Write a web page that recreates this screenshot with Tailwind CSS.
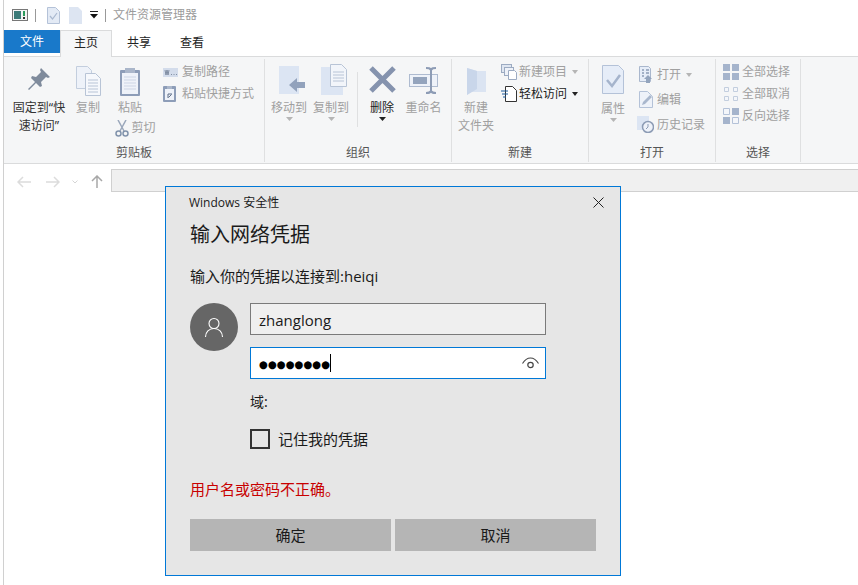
<!DOCTYPE html>
<html lang="zh-CN">
<head>
    <meta charset="UTF-8">
    <title>文件资源管理器</title>
    <script src="https://cdn.jsdelivr.net/npm/@tailwindcss/browser@4"></script>
</head>
<body class="relative w-[858px] h-[585px] overflow-hidden bg-white font-['Noto_Sans','Noto_Sans_CJK_SC',sans-serif] text-[12px] leading-[18px]">
    <div class="ml-[3px] h-full border-l border-[#d0d0d0] flex flex-col">

        <!-- title bar -->
        <div class="h-[30px] flex items-center pl-[8px] text-[#9b9b9b]">
            <svg class="w-[16px] h-[14px]" viewBox="0 0 16 14"><rect x="0.5" y="1.5" width="15" height="11" fill="#f4f4f4" stroke="#777"/><rect x="2" y="3" width="7" height="8" fill="#3c7a78"/><rect x="11" y="3" width="2" height="5" fill="#2a9a5a"/><rect x="11" y="9" width="2" height="2" fill="#333"/></svg>
            <div class="ml-[7px] w-px h-[13px] bg-[#999]"></div>
            <svg class="ml-[11px] w-[13px] h-[17px]" viewBox="0 0 13 17"><path d="M.5.5h8l4 4v12H.5z" fill="#e3eaf5" stroke="#b4c2d8"/><path d="M3 9l2.5 3L10 6" fill="none" stroke="#a9b8cf" stroke-width="1.2"/></svg>
            <svg class="ml-[9px] w-[13px] h-[17px]" viewBox="0 0 13 17"><path d="M0 0h9l4 4v13H0z" fill="#dde5f2"/></svg>
            <svg class="ml-[8px] w-[8px] h-[8px]" viewBox="0 0 8 8"><rect y="0" width="8" height="1" fill="#222"/><path d="M0 3h8L4 7.5z" fill="#111"/></svg>
            <div class="ml-[7px] w-px h-[13px] bg-[#999]"></div>
            <span class="ml-[7px]">文件资源管理器</span>
        </div>

        <!-- tabs -->
        <div class="h-[27px] flex border-b border-[#dadbdc] text-[#222]">
            <div class="w-[56px] h-[23px] bg-[#1979ca] text-white flex items-center justify-center">文件</div>
            <div class="w-[52px] h-[27px] pb-[2px] bg-[#f5f6f7] border border-b-0 border-[#dadbdc] flex items-center justify-center">主页</div>
            <div class="w-[54px] h-[26px] flex items-center justify-center">共享</div>
            <div class="w-[52px] h-[26px] flex items-center justify-center">查看</div>
        </div>

        <!-- ribbon -->
        <div class="h-[107px] bg-[#f5f6f7] border-b border-[#dadbdc] flex text-[#a0a0a0] pt-[2px] pb-[1px]">

            <!-- clipboard -->
            <div class="w-[261px] flex flex-col border-r border-[#dfe0e1]">
                <div class="flex-1 flex">
                    <div class="ml-[4px] w-[62px] flex flex-col items-center text-center text-[#333]">
                        <svg class="mt-[8px] w-[24px] h-[24px]" viewBox="0 0 24 24"><path d="M14 1l9 9-2 1-2-1-5 5 1 4-2 1-4-4-7 7-1-1 7-7-4-4 1-2 4 1 5-5-1-2z" fill="#7f8b9c"/></svg>
                        <div class="mt-[8px] leading-[18px]">固定到“快<br>速访问”</div>
                    </div>
                    <div class="-ml-[3px] w-[42px] flex flex-col items-center">
                        <svg class="mt-[7px] w-[25px] h-[30px]" viewBox="0 0 25 30"><path d="M.5.5h11l4 4v18H.5z" fill="#eef2f9" stroke="#c3cede"/><path d="M9.5 7.5h10l5 5v17h-15z" fill="#f6f8fc" stroke="#b8c4d6"/><path d="M12 14h10M12 17h10M12 20h10M12 23h10M12 26h10" stroke="#b8c4d6"/></svg>
                        <div class="mt-[3px]">复制</div>
                    </div>
                    <div class="w-[42px] flex flex-col items-center">
                        <svg class="mt-[8px] w-[22px] h-[30px]" viewBox="0 0 22 30"><rect x="1" y="3" width="20" height="26" rx="1" fill="#8d9db8"/><rect x="3" y="6" width="16" height="21" fill="#eef2f9"/><path d="M5 10h12M5 13h12M5 16h12M5 19h12M5 22h12" stroke="#ccd5e5"/><rect x="6" y="1" width="10" height="5" fill="#aab6ca"/></svg>
                        <div class="mt-[2px]">粘贴</div>
                        <div class="ml-[10px] mt-[2px] flex items-center gap-[3px] whitespace-nowrap">
                            <svg class="w-[14px] h-[17px] shrink-0" viewBox="0 0 14 17"><path d="M3 0l6 11M11 0L5 11" stroke="#9aa7bb" stroke-width="1.5"/><circle cx="3.5" cy="13.5" r="2.5" fill="none" stroke="#8193ac" stroke-width="1.5"/><circle cx="10.5" cy="13.5" r="2.5" fill="none" stroke="#8193ac" stroke-width="1.5"/></svg>
                            <span>剪切</span>
                        </div>
                    </div>
                    <div class="ml-[12px] pt-[4px] flex flex-col gap-[4px]">
                        <div class="flex items-center gap-[4px]">
                            <svg class="w-[15px] h-[9px]" viewBox="0 0 15 9"><rect width="15" height="9" fill="#d3dceb"/><path d="M2 2l1 5 1-5 1 5 1-5M8 6.5h1M10.5 6.5h1M13 6.5h1" stroke="#6d7b91" fill="none" stroke-width=".8"/></svg>
                            <span>复制路径</span>
                        </div>
                        <div class="flex items-center gap-[6px]">
                            <svg class="w-[13px] h-[16px]" viewBox="0 0 13 16"><rect width="13" height="16" rx="1" fill="#8d9db8"/><rect x="2" y="3" width="9" height="11" fill="#eef2f9"/><rect x="4" y="0" width="5" height="3" fill="#aab6ca"/><path d="M5 12V8h4M8.5 8.5L5.5 11.5" stroke="#5f6f88" fill="none"/></svg>
                            <span>粘贴快捷方式</span>
                        </div>
                    </div>
                </div>
                <div class="text-center text-[#555]">剪贴板</div>
            </div>

            <!-- organize -->
            <div class="w-[187px] flex flex-col border-r border-[#dfe0e1]">
                <div class="flex-1 flex pl-[3px]">
                    <div class="w-[42px] flex flex-col items-center">
                        <svg class="mt-[7px] ml-[6px] w-[26px] h-[29px]" viewBox="0 0 26 29"><path d="M0 0h20v28H0z" fill="#dce5f3"/><path d="M10 19l8-7v4h8v6h-8v4z" fill="#92a2bc"/></svg>
                        <div class="mt-[4px]">移动到</div>
                        <svg class="w-[7px] h-[4px]" viewBox="0 0 7 4"><path d="M0 0h7L3.5 4z" fill="#b5b5b5"/></svg>
                    </div>
                    <div class="w-[42px] flex flex-col items-center">
                        <svg class="mt-[5px] ml-[6px] w-[26px] h-[31px]" viewBox="0 0 26 31"><path d="M0 3h22v28H0z" fill="#dce5f3"/><path d="M9.500.5h11l5 5v17h-16z" fill="#f2f5fa" stroke="#b8c4d6"/><path d="M12 8h11M12 11h11M12 14h11M12 17h11" stroke="#b8c4d6"/></svg>
                        <div class="mt-[4px]">复制到</div>
                        <svg class="w-[7px] h-[4px]" viewBox="0 0 7 4"><path d="M0 0h7L3.5 4z" fill="#b5b5b5"/></svg>
                    </div>
                    <div class="ml-[5px] mt-[13px] w-px h-[55px] bg-[#dfe0e1]"></div>
                    <div class="ml-[3px] w-[42px] flex flex-col items-center text-[#222]">
                        <svg class="mt-[7px] w-[27px] h-[27px]" viewBox="0 0 27 27"><path d="M2 2l23 23M25 2L2 25" stroke="#8593ae" stroke-width="5"/></svg>
                        <div class="mt-[6px]">删除</div>
                        <svg class="w-[7px] h-[4px]" viewBox="0 0 7 4"><path d="M0 0h7L3.500 4z" fill="#222"/></svg>
                    </div>
                    <div class="w-[41px] flex flex-col items-center">
                        <svg class="mt-[8px] w-[29px] h-[27px]" viewBox="0 0 29 27"><rect x=".5" y="7.500" width="28" height="12" fill="#eef2f9" stroke="#aebbd0"/><rect x="4" y="10" width="14" height="7" fill="#94a4bd"/><path d="M17 1c3 0 4 0 5 2v21c-1 2-2 2-5 2M27 1c-3 0-4 0-5 2M27 26c-3 0-4 0-5-2" fill="none" stroke="#8d9cb5" stroke-width="2"/></svg>
                        <div class="mt-[5px]">重命名</div>
                    </div>
                </div>
                <div class="text-center text-[#555]">组织</div>
            </div>

            <!-- new -->
            <div class="w-[137px] flex flex-col border-r border-[#dfe0e1]">
                <div class="flex-1 flex pl-[2px]">
                    <div class="w-[44px] flex flex-col items-center text-center">
                        <svg class="mt-[9px] w-[19px] h-[27px]" viewBox="0 0 19 27"><path d="M0 0l10 3h9v21H4l-4 3z" fill="#dbe4f2"/><path d="M0 0l10 3v18L0 27z" fill="#c9d6ea"/></svg>
                        <div class="mt-[4px] leading-[18px]">新建<br>文件夹</div>
                    </div>
                    <div class="ml-[3px] pt-[4px] flex flex-col gap-[4px]">
                        <div class="flex items-center gap-[2px] whitespace-nowrap">
                            <svg class="w-[16px] h-[16px]" viewBox="0 0 16 16"><rect x=".5" y=".5" width="10" height="8" fill="#dfe6f1" stroke="#9cabc2"/><rect x="3.500" y="3.500" width="9" height="8" fill="#eef2f9" stroke="#9cabc2"/><path d="M7.500 6.500h6l2 2v7h-8z" fill="#fff" stroke="#9cabc2"/></svg>
                            <span>新建项目</span>
                            <svg class="ml-[3px] w-[6px] h-[4px]" viewBox="0 0 6 4"><path d="M0 0h6L3 4z" fill="#b5b5b5"/></svg>
                        </div>
                        <div class="flex items-center gap-[2px] whitespace-nowrap text-[#222]">
                            <svg class="w-[16px] h-[16px]" viewBox="0 0 16 16"><path d="M4.500.5h7l4 4v11h-11z" fill="#fff" stroke="#333"/><path d="M0 5h7M1 8h6M2 11h3" stroke="#1c5b9c"/></svg>
                            <span>轻松访问</span>
                            <svg class="ml-[3px] w-[6px] h-[4px]" viewBox="0 0 6 4"><path d="M0 0h6L3 4z" fill="#222"/></svg>
                        </div>
                    </div>
                </div>
                <div class="text-center text-[#555]">新建</div>
            </div>

            <!-- open -->
            <div class="w-[127px] flex flex-col border-r border-[#dfe0e1]">
                <div class="flex-1 flex">
                    <div class="w-[48px] flex flex-col items-center">
                        <svg class="mt-[6px] w-[22px] h-[29px]" viewBox="0 0 22 29"><path d="M.5.5h16l5 5v23H.5z" fill="#e6edf8" stroke="#b4c2d8"/><path d="M5 15l5 6 8-11" fill="none" stroke="#a5b4cc" stroke-width="2.500"/></svg>
                        <div class="mt-[6px]">属性</div>
                        <svg class="w-[7px] h-[4px]" viewBox="0 0 7 4"><path d="M0 0h7L3.500 4z" fill="#b5b5b5"/></svg>
                    </div>
                    <div class="pl-[2px] pt-[3px] flex flex-col">
                        <div class="h-[25px] flex items-center gap-[4px] whitespace-nowrap">
                            <svg class="w-[14px] h-[17px]" viewBox="0 0 14 17"><path d="M.5.500h9l2 2v13H.5z" fill="#e6edf8" stroke="#a9b7cd"/><path d="M3 4h2M7 4h3M3 7h2M7 7h3M3 10h2" stroke="#8c9cb5" stroke-width="1.500"/><path d="M7 17v-4H5l4-4 4 4h-2v4z" fill="#93a4bd"/></svg>
                            <span>打开</span>
                            <svg class="ml-[1px] w-[6px] h-[4px]" viewBox="0 0 6 4"><path d="M0 0h6L3 4z" fill="#b5b5b5"/></svg>
                        </div>
                        <div class="h-[25px] flex items-center gap-[4px] whitespace-nowrap">
                            <svg class="w-[14px] h-[17px]" viewBox="0 0 14 17"><path d="M.5.500h8l5 5v11H.5z" fill="#eef2f9" stroke="#b4c2d8"/><path d="M3 14l1-3 7-7 2 2-7 7z" fill="#a9b7cd"/></svg>
                            <span>编辑</span>
                        </div>
                        <div class="h-[25px] -ml-[2px] flex items-center gap-[3px] whitespace-nowrap">
                            <svg class="w-[17px] h-[17px]" viewBox="0 0 17 17"><rect width="12" height="14" fill="#dce5f3"/><circle cx="11" cy="11" r="5.500" fill="#eef2f9" stroke="#8d9cb5" stroke-width="1.500"/><path d="M11 8v3l-2 2" stroke="#8d9cb5" fill="none"/></svg>
                            <span>历史记录</span>
                        </div>
                    </div>
                </div>
                <div class="text-center text-[#555]">打开</div>
            </div>

            <!-- select -->
            <div class="w-[85px] flex flex-col border-r border-[#dfe0e1]">
                <div class="flex-1 pl-[7px] pt-[4px] flex flex-col gap-[4px] whitespace-nowrap">
                    <div class="flex items-center gap-[3px]">
                        <svg class="w-[16px] h-[16px]" viewBox="0 0 16 16"><path d="M0 0h7v7H0zM9 0h7v7H9zM0 9h7v7H0zM9 9h7v7H9z" fill="#a5b4cc"/></svg>
                        <span>全部选择</span>
                    </div>
                    <div class="flex items-center gap-[3px]">
                        <svg class="w-[16px] h-[16px]" viewBox="0 0 16 16"><path d="M1.500 1.500h4v4h-4zM10.500 1.500h4v4h-4zM1.500 10.500h4v4h-4zM10.500 10.500h4v4h-4z" fill="#f4f6fa" stroke="#c3cede"/></svg>
                        <span>全部取消</span>
                    </div>
                    <div class="flex items-center gap-[3px]">
                        <svg class="w-[16px] h-[16px]" viewBox="0 0 16 16"><path d="M9 0h7v7H9zM0 9h7v7H0z" fill="#a5b4cc"/><path d="M.5.500h6v6h-6zM9.500 9.500h6v6h-6z" fill="#f4f6fa" stroke="#b4c2d8"/></svg>
                        <span>反向选择</span>
                    </div>
                </div>
                <div class="text-center text-[#555]">选择</div>
            </div>
        </div>

        <!-- nav bar -->
        <div class="flex h-[28px] pt-[5px]">
            <div class="w-[107px] flex items-center pl-[13px] h-[25px]">
                <svg class="w-[14px] h-[12px]" viewBox="0 0 14 12"><path d="M6 1L1 6l5 5M1 6h13" fill="none" stroke="#dcdcdc" stroke-width="1.500"/></svg>
                <svg class="ml-[15px] w-[14px] h-[12px]" viewBox="0 0 14 12"><path d="M8 1l5 5-5 5M13 6H0" fill="none" stroke="#dcdcdc" stroke-width="1.500"/></svg>
                <svg class="ml-[12px] w-[6px] h-[4px]" viewBox="0 0 6 4"><path d="M.5.500L3 3l2.500-2.500" fill="none" stroke="#d5d5d5"/></svg>
                <svg class="ml-[13px] w-[12px] h-[13px]" viewBox="0 0 12 13"><path d="M1 6l5-5 5 5M6 1v12" fill="none" stroke="#a8a8a8" stroke-width="1.500"/></svg>
            </div>
            <div class="flex-1 h-[23px] bg-[#f0f0f0] border border-r-0 border-[#d0d0d0]"></div>
        </div>
    </div>

    <!-- credentials dialog -->
    <div class="absolute left-[165px] top-[186px] w-[456px] h-[390px] bg-[#e6e6e6] border border-[#0078d7] pl-[24px] pr-[24px] text-[#1a1a1a] flex flex-col">
        <div class="h-[31px] -ml-[1px] flex items-center justify-between text-[12px]">
            <span class="font-['Open_Sans','Noto_Sans_CJK_SC',sans-serif]">Windows 安全性</span>
            <svg class="mr-[-8px] w-[11px] h-[11px]" viewBox="0 0 11 11"><path d="M.5.500l10 10M10.500.500l-10 10" stroke="#222"/></svg>
        </div>
        <div class="h-[32px] flex items-center text-[20px] leading-[32px] mt-[1px]">输入网络凭据</div>
        <div class="mt-[14px] text-[15px] leading-[22px] font-['Open_Sans','Noto_Sans_CJK_SC',sans-serif]">输入你的凭据以连接到:heiqi</div>
        <div class="mt-[16px] flex">
            <div class="w-[48px] h-[48px] rounded-full bg-[#666] flex items-center justify-center shrink-0">
                <svg class="w-[20px] h-[20px]" viewBox="0 0 20 20"><circle cx="10" cy="6.500" r="5" fill="none" stroke="#fff" stroke-width="1.100"/><path d="M1.500 20c0-5 3.500-8.500 8.500-8.500s8.500 3.500 8.500 8.500" fill="none" stroke="#fff" stroke-width="1.100"/></svg>
            </div>
            <div class="ml-[12px] w-[296px] flex flex-col">
                <div class="h-[32px] pt-[2px] bg-[#efefef] border border-[#7a7a7a] pl-[8px] flex items-center text-[15px] font-['Open_Sans',sans-serif]">zhanglong</div>
                <div class="mt-[12px] h-[32px] bg-white border border-[#0078d7] pl-[8px] pr-[6px] flex items-center justify-between">
                    <div class="flex items-center">
                        <span class="pt-[3px] font-['DejaVu_Sans',sans-serif] text-[10.2px] leading-[20px] text-black">●●●●●●●●</span>
                        <span class="w-px h-[18px] bg-black"></span>
                    </div>
                    <svg class="w-[17px] h-[13px]" viewBox="0 0 17 13"><path d="M.5 6.500C3 2.500 5.500 1 8.500 1s5.500 1.500 8 5.500" fill="none" stroke="#444" stroke-width="1.100"/><circle cx="8.500" cy="8" r="2.700" fill="none" stroke="#444" stroke-width="1.200"/></svg>
                </div>
                <div class="mt-[13px] text-[14px] leading-[20px]">域:</div>
                <div class="mt-[17px] h-[20px] flex items-center">
                    <div class="w-[20px] h-[20px] border-2 border-[#333]"></div>
                    <span class="ml-[8px] pb-[1px] text-[15px] leading-[20px]">记住我的凭据</span>
                </div>
            </div>
        </div>
        <div class="mt-[29px] text-[15px] leading-[22px] text-[#c80000]">用户名或密码不正确。</div>
        <div class="mt-[19px] flex gap-[4px] text-[15px]">
            <div class="w-[201px] h-[32px] bg-[#b5b5b5] flex items-center justify-center">确定</div>
            <div class="w-[201px] h-[32px] bg-[#b5b5b5] flex items-center justify-center">取消</div>
        </div>
    </div>
</body>
</html>
